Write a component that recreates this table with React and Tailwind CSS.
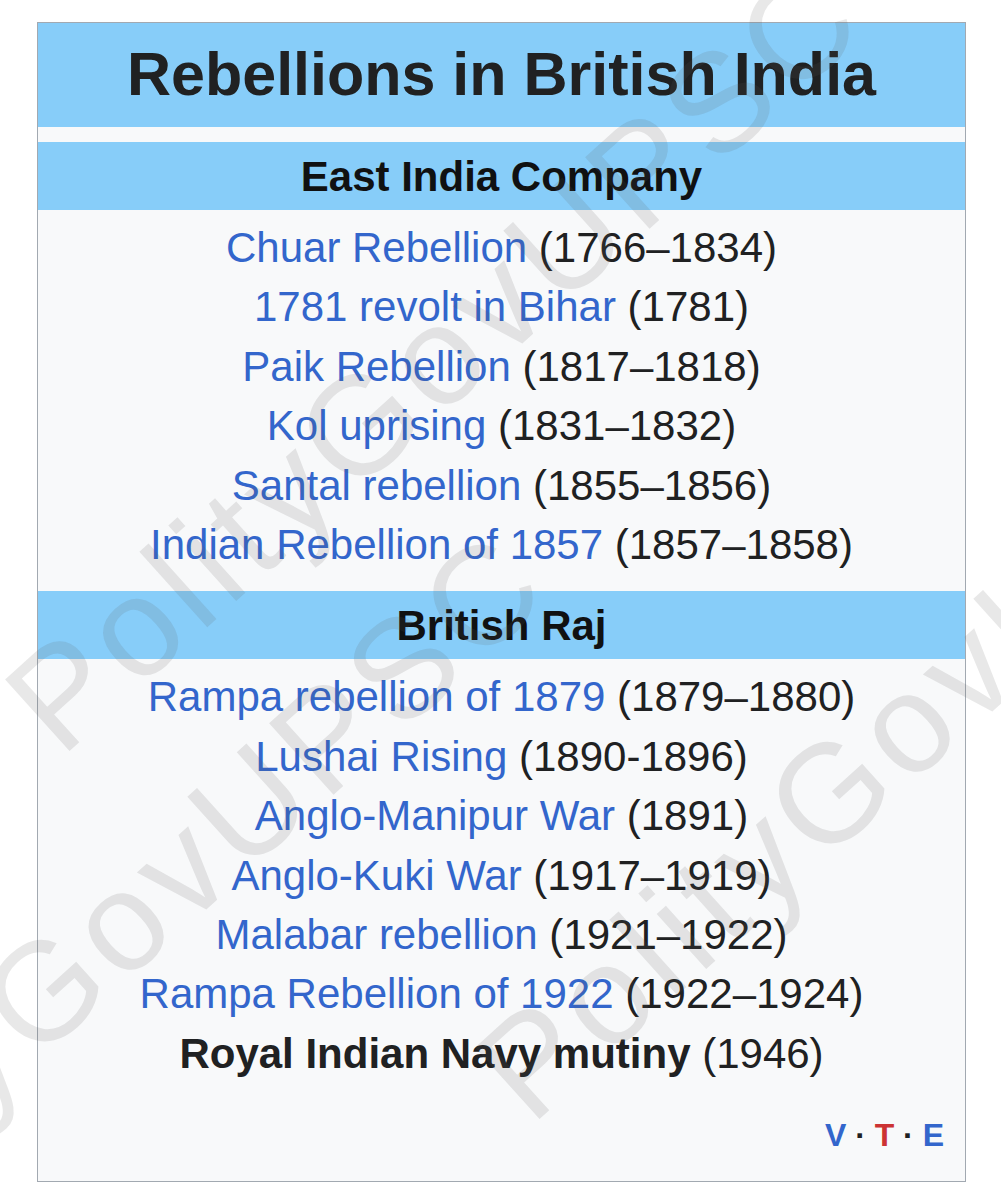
import React from "react";

const eastIndia = [
  ["Chuar Rebellion", "(1766–1834)"],
  ["1781 revolt in Bihar", "(1781)"],
  ["Paik Rebellion", "(1817–1818)"],
  ["Kol uprising", "(1831–1832)"],
  ["Santal rebellion", "(1855–1856)"],
  ["Indian Rebellion of 1857", "(1857–1858)"],
];

const raj = [
  ["Rampa rebellion of 1879", "(1879–1880)"],
  ["Lushai Rising", "(1890-1896)"],
  ["Anglo-Manipur War", "(1891)"],
  ["Anglo-Kuki War", "(1917–1919)"],
  ["Malabar rebellion", "(1921–1922)"],
  ["Rampa Rebellion of 1922", "(1922–1924)"],
];

function Row({ name, years }) {
  return (
    <div className="text-center leading-[59.4px] whitespace-nowrap">
      <a href="#" className="text-[#3366cc] no-underline">{name}</a>{" "}
      <span className="text-[#202122]">{years}</span>
    </div>
  );
}

function Header({ children }) {
  return (
    <div className="h-[68px] bg-[#87cdf9] flex items-center justify-center font-bold text-[42px] text-[#101112]">
      {children}
    </div>
  );
}

function Watermark({ className }) {
  return (
    <div
      aria-hidden="true"
      className={
        "absolute pointer-events-none select-none whitespace-nowrap origin-left -rotate-[42deg] text-[140px] leading-[140px] tracking-[8px] text-[rgba(90,90,90,0.14)] " +
        className
      }
    >
      PolityGovUPSC
    </div>
  );
}

export default function App() {
  return (
    <div
      className="relative w-[1001px] h-[1200px] overflow-hidden bg-white"
      style={{ fontFamily: '"Liberation Sans", Arial, sans-serif' }}
    >
      <div className="ml-[37px] mt-[22px] w-[929px] border border-[#a2a9b1] bg-[#f8f9fa] text-[42px] text-[#202122]">
        <div className="h-[104px] bg-[#87cdf9] flex items-center justify-center font-bold text-[61px] text-[#202122]">
          Rebellions in British India
        </div>
        <div className="h-[15px]" />
        <Header>East India Company</Header>
        <div className="pt-[8px] pb-[17px]">
          {eastIndia.map(([n, y]) => (
            <Row key={n} name={n} years={y} />
          ))}
        </div>
        <Header>British Raj</Header>
        <div className="pt-[8px]">
          {raj.map(([n, y]) => (
            <Row key={n} name={n} years={y} />
          ))}
          <div className="text-center leading-[59.4px] whitespace-nowrap">
            <span className="font-bold text-[#202122]">Royal Indian Navy mutiny</span>{" "}
            <span className="text-[#202122]">(1946)</span>
          </div>
        </div>
        <div className="mt-[34px] mb-[28px] pr-[21px] flex justify-end text-[32px] leading-[36px] font-bold whitespace-pre">
          <span className="text-[#3366cc]">V</span>
          <span className="text-[#202122]"> · </span>
          <span className="text-[#cc3333]">T</span>
          <span className="text-[#202122]"> · </span>
          <span className="text-[#3366cc]">E</span>
        </div>
      </div>

      <Watermark className="left-[29px] top-[653px]" />
      <Watermark className="left-[-287px] top-[1219px]" />
      <Watermark className="left-[499px] top-[1021px]" />
    </div>
  );
}
